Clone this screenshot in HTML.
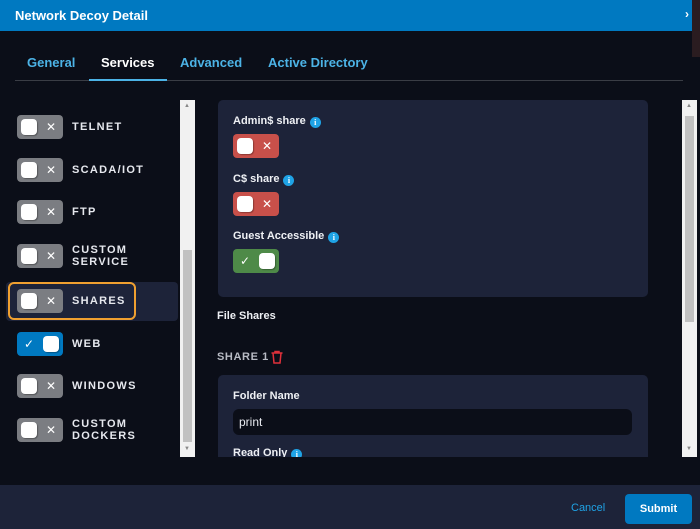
<!DOCTYPE html>
<html><head><style>
*{box-sizing:border-box;margin:0;padding:0}
body{width:700px;height:529px;background:#0b0e18;font-family:"Liberation Sans",sans-serif;position:relative;overflow:hidden;color:#e8eaf0}
.hdr{position:absolute;left:0;top:0;width:700px;height:31px;background:#0079c1;color:#fff;font-size:13px;font-weight:bold;padding:8px 0 0 15px}
.redstrip{position:absolute;left:692px;top:0;width:8px;height:57px;background:#2a1c20}
.x{position:absolute;left:685px;top:7px;color:#fff;font-size:12px;font-weight:bold}
.tabs{position:absolute;top:55px;left:15px;font-size:13px;font-weight:bold}
.tab{position:absolute;top:0;color:#4cb3e6;white-space:nowrap}
.line{position:absolute;left:15px;top:80px;width:668px;height:1px;background:#3a3d45}
.uline{position:absolute;left:89px;top:79px;width:78px;height:2px;background:#4cb3e6}
.tg{position:absolute;width:46px;height:24px;border-radius:4px;background:#7b7d82}
.tg .k{position:absolute;top:4px;width:16px;height:16px;border-radius:4px;background:#fff;box-shadow:1px 1px 1px rgba(0,0,0,.3)}
.tg .s{position:absolute;top:4px;color:#fff;font-size:12px;line-height:16px}
.lbl{position:absolute;left:72px;font-size:11px;font-weight:bold;letter-spacing:1.3px;color:#e6e8ee;line-height:12px}
.sb{position:absolute;width:15px;background:#f1f1f1;top:100px;height:357px}
.sb .th{position:absolute;left:3px;width:9px;background:#c1c1c1}
.panel{position:absolute;background:#1d2339;border-radius:5px}
.fl{position:absolute;font-size:11px;font-weight:bold;color:#eef0f4}
.info{display:inline-block;width:11px;height:11px;border-radius:50%;background:#1fa3e6;color:#fff;font-size:8px;text-align:center;line-height:11px;vertical-align:-1px;margin-left:4px;font-family:"Liberation Serif",serif;font-weight:bold}
</style></head><body>
<div class="hdr">Network Decoy Detail</div>
<div class="redstrip"></div>
<div class="x">›</div>
<div class="tabs">
<span class="tab" style="left:12px">General</span>
<span class="tab" style="left:86px;color:#fff">Services</span>
<span class="tab" style="left:165px">Advanced</span>
<span class="tab" style="left:253px">Active Directory</span>
</div>
<div class="line"></div><div class="uline"></div>

<div style="position:absolute;left:6px;top:282px;width:172px;height:39px;background:#1d2339;border-radius:4px"></div>
<div style="position:absolute;left:8px;top:282px;width:128px;height:38px;border:2px solid #f0a030;border-radius:6px"></div>

<div class="tg" style="left:17px;top:115px"><div class="k" style="left:4px"></div><div class="s" style="left:29px">✕</div></div><div class="lbl" style="top:121px">TELNET</div>
<div class="tg" style="left:17px;top:158px"><div class="k" style="left:4px"></div><div class="s" style="left:29px">✕</div></div><div class="lbl" style="top:164px">SCADA/IOT</div>
<div class="tg" style="left:17px;top:200px"><div class="k" style="left:4px"></div><div class="s" style="left:29px">✕</div></div><div class="lbl" style="top:206px">FTP</div>
<div class="tg" style="left:17px;top:244px"><div class="k" style="left:4px"></div><div class="s" style="left:29px">✕</div></div><div class="lbl" style="top:244px">CUSTOM<br>SERVICE</div>
<div class="tg" style="left:17px;top:289px"><div class="k" style="left:4px"></div><div class="s" style="left:29px">✕</div></div><div class="lbl" style="top:295px">SHARES</div>
<div class="tg" style="left:17px;top:332px;background:#0079c1"><div class="s" style="left:7px">✓</div><div class="k" style="left:26px"></div></div><div class="lbl" style="top:338px">WEB</div>
<div class="tg" style="left:17px;top:374px"><div class="k" style="left:4px"></div><div class="s" style="left:29px">✕</div></div><div class="lbl" style="top:380px">WINDOWS</div>
<div class="tg" style="left:17px;top:418px"><div class="k" style="left:4px"></div><div class="s" style="left:29px">✕</div></div><div class="lbl" style="top:418px">CUSTOM<br>DOCKERS</div>

<div class="sb" style="left:180px"><div class="th" style="top:150px;height:192px"></div><div style="position:absolute;left:4px;top:3px;font-size:6px;color:#888">▲</div><div style="position:absolute;left:4px;top:346px;font-size:6px;color:#888">▼</div></div>
<div class="sb" style="left:682px"><div class="th" style="top:16px;height:206px"></div><div style="position:absolute;left:4px;top:3px;font-size:6px;color:#888">▲</div><div style="position:absolute;left:4px;top:346px;font-size:6px;color:#888">▼</div></div>

<div class="panel" style="left:218px;top:100px;width:430px;height:197px"></div>
<div class="fl" style="left:233px;top:115px">Admin$ share<span class="info">i</span></div>
<div class="tg" style="left:233px;top:134px;background:#c8504a"><div class="k" style="left:4px"></div><div class="s" style="left:29px">✕</div></div>
<div class="fl" style="left:233px;top:173px">C$ share<span class="info">i</span></div>
<div class="tg" style="left:233px;top:192px;background:#c8504a"><div class="k" style="left:4px"></div><div class="s" style="left:29px">✕</div></div>
<div class="fl" style="left:233px;top:230px">Guest Accessible<span class="info">i</span></div>
<div class="tg" style="left:233px;top:249px;background:#4e8a48"><div class="s" style="left:7px">✓</div><div class="k" style="left:26px"></div></div>

<div class="fl" style="left:217px;top:310px">File Shares</div>
<div style="position:absolute;left:217px;top:351px;font-size:11px;font-weight:bold;letter-spacing:0.6px;color:#b8bbc4">SHARE 1</div>
<svg style="position:absolute;left:270px;top:350px" width="14" height="14" viewBox="0 0 14 14" fill="none" stroke="#e0303a" stroke-width="1.5"><path d="M1.5 3h11M5 3V1.5h4V3M3 3l1 10h6l1-10"/></svg>
<div class="panel" style="left:218px;top:375px;width:430px;height:82px;border-radius:5px 5px 0 0"></div>
<div class="fl" style="left:233px;top:390px">Folder Name</div>
<div style="position:absolute;left:233px;top:409px;width:399px;height:26px;background:#0b0e18;border-radius:6px;font-size:12px;color:#e8eaf0;padding:6px 0 0 6px">print</div>
<div style="position:absolute;left:218px;top:446px;width:430px;height:11px;overflow:hidden"><div class="fl" style="left:15px;top:1px">Read Only<span class="info">i</span></div></div>

<div style="position:absolute;left:0;top:485px;width:700px;height:44px;background:#1d2339"></div>
<div style="position:absolute;left:571px;top:502px;font-size:11px;color:#1fa3e6">Cancel</div>
<div style="position:absolute;left:625px;top:494px;width:67px;height:30px;background:#0079c1;border-radius:4px;color:#fff;font-size:11px;font-weight:bold;text-align:center;line-height:30px">Submit</div>
</body></html>
